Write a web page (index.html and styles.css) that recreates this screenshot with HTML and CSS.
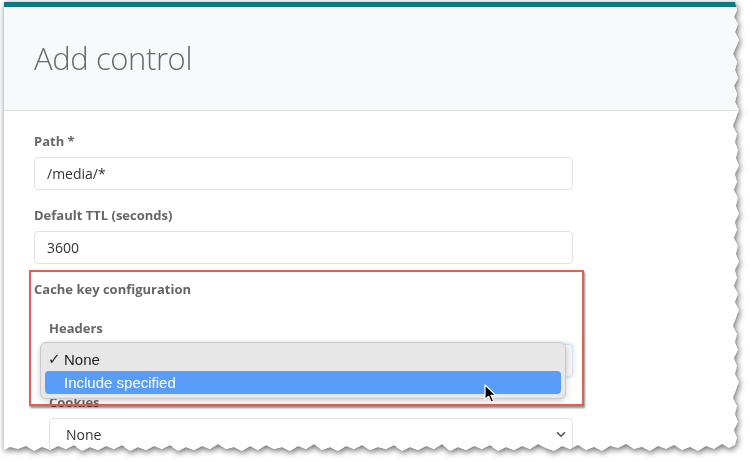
FILE: index.html
```html
<!DOCTYPE html>
<html>
<head>
<meta charset="utf-8">
<link rel="stylesheet" href="styles.css">
</head>
<body>
<div class="shot">
  <div class="page">
    <div class="topbar"></div>
    <div class="header"><h1 class="title">Add control</h1></div>
    <div class="form">
      <div class="field">
        <div class="label">Path *</div>
        <div class="input">/media/*</div>
      </div>
      <div class="field">
        <div class="label">Default TTL (seconds)</div>
        <div class="input">3600</div>
      </div>
      <div class="group">
        <div class="label group-label">Cache key configuration</div>
        <div class="group-body">
          <div class="field">
            <div class="label">Headers</div>
            <div class="input select focused"><span>None</span>
              <svg class="chev" width="10" height="7" viewBox="0 0 10 7"><path d="M1 1.2 L5 5.2 L9 1.2" fill="none" stroke="#555" stroke-width="1.6"/></svg>
            </div>
          </div>
          <div class="field">
            <div class="label">Cookies</div>
            <div class="input select"><span>None</span>
              <svg class="chev" width="10" height="7" viewBox="0 0 10 7"><path d="M1 1.2 L5 5.2 L9 1.2" fill="none" stroke="#555" stroke-width="1.6"/></svg>
            </div>
          </div>
        </div>
      </div>
    </div>

    <div class="annot"></div>

    <div class="popup">
      <div class="opt"><span class="check">✓</span>None</div>
      <div class="opt hi">Include specified</div>
    </div>

    <svg class="cursor" width="14" height="20" viewBox="0 0 14 20">
      <path d="M1 1 L1 15.5 L4.6 12.3 L7.2 18.2 L9.6 17.1 L7.1 11.4 L11.8 11.2 Z" fill="#000" stroke="#fff" stroke-width="1.2" stroke-linejoin="round"/>
    </svg>
  </div>
</div>
</body>
</html>
```

FILE: styles.css
```css
html, body {
  margin: 0;
  padding: 0;
  background: #ffffff;
}

.shot {
  padding: 2px 0 0 4px;
  width: 746px;
  height: 460px;
  filter: drop-shadow(1px 2px 3px rgba(0, 0, 0, 0.6));
}

.page {
  position: relative;
  width: 738px;
  height: 452px;
  background: #ffffff;
  overflow: hidden;
  font-family: "Open Sans", "Noto Sans", sans-serif;
  clip-path: polygon(0 0, 731px 0, 733px 8px, 730px 15px, 734px 22px, 731px 30px, 735px 38px, 732px 45px, 729px 52px, 733px 60px, 731px 68px, 734px 76px, 730px 84px, 733px 92px, 731px 100px, 735px 108px, 732px 116px, 729px 124px, 733px 132px, 731px 140px, 734px 148px, 732px 156px, 735px 164px, 731px 172px, 733px 180px, 730px 188px, 734px 196px, 732px 204px, 735px 212px, 731px 220px, 733px 228px, 730px 236px, 734px 244px, 732px 252px, 735px 260px, 731px 268px, 733px 276px, 730px 284px, 734px 292px, 731px 300px, 735px 308px, 732px 316px, 729px 324px, 733px 332px, 731px 340px, 734px 348px, 730px 356px, 733px 364px, 731px 372px, 735px 380px, 732px 388px, 729px 396px, 733px 404px, 731px 412px, 734px 420px, 730px 428px, 733px 436px, 731px 443px, 725px 446px, 718px 442px, 710px 447px, 702px 444px, 694px 449px, 686px 445px, 678px 448px, 670px 443px, 662px 447px, 654px 444px, 646px 449px, 638px 445px, 630px 447px, 622px 442px, 614px 446px, 606px 444px, 598px 449px, 590px 445px, 582px 448px, 574px 443px, 566px 447px, 558px 444px, 550px 449px, 542px 446px, 534px 442px, 526px 447px, 518px 444px, 510px 448px, 502px 445px, 494px 449px, 486px 443px, 478px 447px, 470px 444px, 462px 448px, 454px 445px, 446px 449px, 438px 442px, 430px 447px, 422px 444px, 414px 448px, 406px 445px, 398px 449px, 390px 443px, 382px 447px, 374px 445px, 366px 448px, 358px 443px, 350px 447px, 342px 444px, 334px 449px, 326px 445px, 318px 448px, 310px 442px, 302px 447px, 294px 444px, 286px 449px, 278px 445px, 270px 447px, 262px 443px, 254px 448px, 246px 444px, 238px 449px, 230px 445px, 222px 447px, 214px 442px, 206px 447px, 198px 444px, 190px 448px, 182px 445px, 174px 449px, 166px 443px, 158px 447px, 150px 444px, 142px 448px, 134px 445px, 126px 449px, 118px 443px, 110px 447px, 102px 444px, 94px 448px, 86px 445px, 78px 449px, 70px 443px, 62px 447px, 54px 444px, 46px 448px, 38px 445px, 30px 449px, 22px 444px, 14px 447px, 6px 445px, 0 448px);
}

.topbar {
  height: 5px;
  background: #0a7b82;
}

.header {
  height: 45px;
  padding: 29px 0 29px 30px;
  background: #f8f9fa;
  border-bottom: 1px solid #dee2e6;
}

.title {
  margin: 0;
  font-size: 31px;
  line-height: 45px;
  font-weight: 300;
  letter-spacing: -0.4px;
  color: #6a6a6a;
}

.form {
  padding: 21px 0 0 30px;
  width: 539px;
}

.field {
  margin-bottom: 16px;
}

.label {
  font-size: 13px;
  line-height: 18px;
  font-weight: 700;
  color: #666666;
  margin-bottom: 7px;
}

.input {
  box-sizing: border-box;
  height: 33px;
  border: 1px solid #dfe1e4;
  border-radius: 4px;
  padding: 0 12px;
  font-size: 14px;
  line-height: 31px;
  color: #333333;
  background: #ffffff;
}

.group-label {
  margin-bottom: 21px;
}

.group-body {
  padding-left: 15px;
}

.select {
  display: flex;
  align-items: center;
  justify-content: space-between;
  padding: 0 6px 0 16px;
}

.focused {
  border-color: #d6e2f0;
  background: #f4f4f4;
  box-shadow: 0 0 3px 2px rgba(150, 190, 240, 0.25);
}

.chev {
  display: block;
}

.annot {
  position: absolute;
  left: 25px;
  top: 268px;
  width: 551px;
  height: 132px;
  border: 2px solid #ef5a4c;
  box-shadow: 1px 2px 2px rgba(0, 0, 0, 0.45);
}

.popup {
  position: absolute;
  left: 36px;
  top: 340px;
  box-sizing: border-box;
  width: 526px;
  height: 57px;
  padding: 5px 4px;
  background: #e7e7e7;
  border: 1px solid #c9c9c9;
  border-radius: 6px;
  box-shadow: 0 2px 6px rgba(0, 0, 0, 0.18);
  font-family: "Liberation Sans", Arial, sans-serif;
  font-size: 15px;
  color: #1e1e1e;
}

.opt {
  position: relative;
  height: 23px;
  line-height: 23px;
  padding-left: 19px;
  border-radius: 4px;
}

.check {
  position: absolute;
  left: 3px;
  top: 0;
  font-family: "DejaVu Sans", sans-serif;
  font-size: 15px;
  font-weight: 700;
}

.hi {
  background: #5a9df8;
  color: #ffffff;
}

.cursor {
  position: absolute;
  left: 480px;
  top: 382px;
}
```
